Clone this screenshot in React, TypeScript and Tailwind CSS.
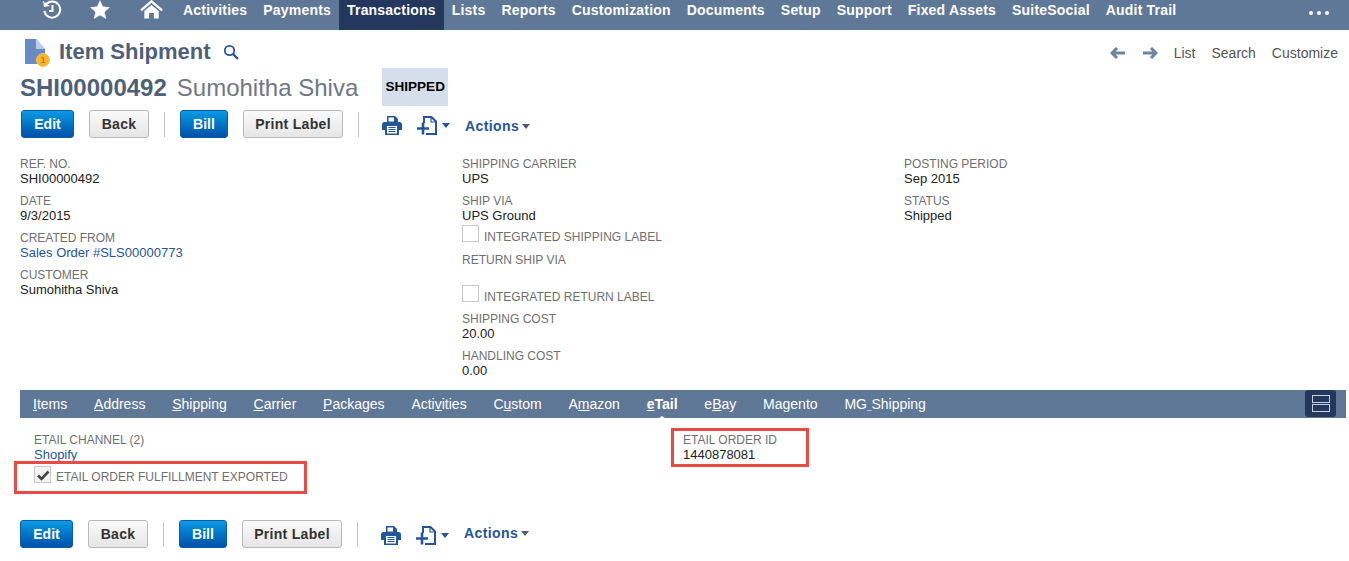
import { useState } from "react";

const navItems = [
  "Activities",
  "Payments",
  "Transactions",
  "Lists",
  "Reports",
  "Customization",
  "Documents",
  "Setup",
  "Support",
  "Fixed Assets",
  "SuiteSocial",
  "Audit Trail",
];

// accessKey letter is the underlined one, same as the real subtab bar
const tabs: { pre: string; key: string; post: string; active?: boolean }[] = [
  { pre: "", key: "I", post: "tems" },
  { pre: "", key: "A", post: "ddress" },
  { pre: "", key: "S", post: "hipping" },
  { pre: "", key: "C", post: "arrier" },
  { pre: "", key: "P", post: "ackages" },
  { pre: "Acti", key: "v", post: "ities" },
  { pre: "C", key: "u", post: "stom" },
  { pre: "A", key: "m", post: "azon" },
  { pre: "", key: "e", post: "Tail", active: true },
  { pre: "e", key: "B", post: "ay" },
  { pre: "Ma", key: "g", post: "ento" },
  { pre: "MG", key: "_", post: "Shipping" },
];

function Field({
  label,
  value,
  link,
}: {
  label: string;
  value?: string;
  link?: boolean;
}) {
  return (
    <div className="h-[37px] text-[12px] leading-[15px]">
      <div className="text-[#6f6f6f]">{label}</div>
      {value && (
        <div className={`-mt-[1px] text-[13px] ${link ? "text-[#255599]" : "text-[#222]"}`}>
          {value}
        </div>
      )}
    </div>
  );
}

function CheckRow({ label, checked }: { label: string; checked?: boolean }) {
  return (
    <div className="flex items-start text-[12px] leading-[15px] text-[#6f6f6f]">
      <span
        className={`flex h-[17px] w-[17px] items-center justify-center border border-[#c8c8c8] ${
          checked ? "bg-[#f3f3f3]" : "bg-white"
        }`}
      >
        {checked && (
          <svg viewBox="0 0 14 14" className="h-[14px] w-[14px]">
            <path d="M2 7.500 L5.500 11 L12.500 3.500" fill="none" stroke="#444" strokeWidth="2.600" />
          </svg>
        )}
      </span>
      <span className={`ml-[5px] ${checked ? "mt-[4px]" : "mt-[5px]"}`}>{label}</span>
    </div>
  );
}

function BlueBtn({ children, w }: { children: string; w: string }) {
  return (
    <button
      className={`h-[28px] ${w} rounded-[3px] border border-[#0b5cab] bg-gradient-to-b from-[#0d9be6] to-[#0050a8] text-[14px] font-bold text-white`}
    >
      {children}
    </button>
  );
}

function GrayBtn({ children, w }: { children: string; w: string }) {
  return (
    <button
      className={`h-[28px] ${w} rounded-[3px] border border-[#b9b9b9] bg-gradient-to-b from-[#fafafa] to-[#e6e6e6] text-[14px] font-bold tracking-[0.3px] text-[#333]`}
    >
      {children}
    </button>
  );
}

function PrintIcon() {
  return (
    <svg viewBox="0 0 20 19" className="h-[19px] w-[20px]">
      <path d="M5 0h8l3 3v4H5z" fill="#255599" />
      <path d="M6.500 1.500h5.500v4H6.500z" fill="#fff" />
      <path d="M2.500 6h15a2.500 2.500 0 0 1 2.500 2.500V14h-3v5H3v-5H0V8.500A2.500 2.500 0 0 1 2.500 6z" fill="#255599" />
      <path d="M5 10h10v7.500H5z" fill="#fff" />
      <path d="M6.500 11.500h7M6.500 13.500h7M6.500 15.500h7" stroke="#255599" strokeWidth="1" />
    </svg>
  );
}

function NewDocIcon() {
  return (
    <svg viewBox="0 0 20 19" className="h-[19px] w-[20px]">
      <path d="M7 7V1h7.500L19 5.500V18H9" fill="none" stroke="#255599" strokeWidth="2" />
      <path d="M14 1v5h5" fill="none" stroke="#255599" strokeWidth="1.200" />
      <path d="M0 12.500h12M6 6.500v12" stroke="#255599" strokeWidth="2.600" />
    </svg>
  );
}

function Caret({ className = "" }: { className?: string }) {
  return (
    <span
      className={`inline-block h-0 w-0 border-x-[4px] border-t-[5px] border-x-transparent border-t-[#4a5f80] ${className}`}
    />
  );
}

function Toolbar({
  className = "",
  iconsClass = "",
  actionsClass = "",
}: {
  className?: string;
  iconsClass?: string;
  actionsClass?: string;
}) {
  return (
    <div className={`flex h-[28px] items-center ${className}`}>
      <BlueBtn w="w-[53px]">Edit</BlueBtn>
      <div className="ml-[15px]">
        <GrayBtn w="w-[60px]">Back</GrayBtn>
      </div>
      <span className="mx-[15px] h-[25px] w-px bg-[#c4c4c4]" />
      <BlueBtn w="w-[48px]">Bill</BlueBtn>
      <div className="ml-[15px]">
        <GrayBtn w="w-[100px]">Print Label</GrayBtn>
      </div>
      <span className="ml-[15px] mr-[23px] h-[25px] w-px bg-[#c4c4c4]" />
      <div className={`flex items-center ${iconsClass}`}>
        <PrintIcon />
        <span className="ml-[15px] flex items-center">
          <NewDocIcon />
          <Caret className="ml-[5px] !border-t-[#255599]" />
        </span>
      </div>
      <div className={`ml-[15px] flex items-center ${actionsClass}`}>
        <span className="text-[14px] font-bold tracking-[0.4px] text-[#255599]">Actions</span>
        <Caret className="ml-[3px]" />
      </div>
    </div>
  );
}

export default function App() {
  const [activeTab] = useState("eTail");

  return (
    <div
      className="h-[561px] w-[1349px] overflow-hidden bg-white"
      style={{ fontFamily: '"Liberation Sans", Arial, sans-serif' }}
    >
      {/* top nav */}
      <div className="flex h-[30px] items-start bg-[#5f7898] text-white">
        <div className="flex h-[30px] w-[175px] items-start">
          <svg viewBox="0 0 20 20" className="ml-[42px] mt-0 h-[20px] w-[20px]">
            <path
              d="M4 4.500A8 8 0 1 1 2.300 11"
              fill="none"
              stroke="#fff"
              strokeWidth="2"
            />
            <path d="M1 1l1 6 6-1z" fill="#fff" />
            <path d="M10.500 5v6H7" fill="none" stroke="#fff" strokeWidth="2" />
          </svg>
          <svg viewBox="0 0 20 20" className="ml-[28px] h-[20px] w-[20px]">
            <path
              d="M10 0l2.900 6.600 7.100.7-5.400 4.700 1.600 7L10 15.300 3.800 19l1.600-7L0 7.300l7.100-.7z"
              fill="#fff"
            />
          </svg>
          <svg viewBox="0 0 24 20" className="ml-[30px] h-[20px] w-[23px]">
            <path d="M1 10.500L12 1l11 9.500" fill="none" stroke="#fff" strokeWidth="2.400" />
            <path d="M4.500 11L12 4.800 19.500 11v8h-5v-6h-5v6h-5z" fill="#fff" />
          </svg>
        </div>
        {navItems.map((item) => (
          <div
            key={item}
            className={`h-[30px] px-[8px] pt-[2px] text-[14px] font-bold leading-[17px] tracking-[0.2px] ${
              item === "Transactions" ? "bg-[#24375c]" : ""
            }`}
          >
            {item}
          </div>
        ))}
        <div className="ml-auto mr-[20px] mt-[11px] flex gap-[4px]">
          <span className="h-[4px] w-[4px] rounded-full bg-white" />
          <span className="h-[4px] w-[4px] rounded-full bg-white" />
          <span className="h-[4px] w-[4px] rounded-full bg-white" />
        </div>
      </div>

      {/* page title */}
      <div className="flex h-[38px] items-center pl-[25px] pr-[11px] pt-[6px]">
        <div className="relative h-[26px] w-[25px]">
          <svg viewBox="0 0 20 26" className="h-[26px] w-[20px]">
            <path d="M0 0h11l9 10v15H0z" fill="#6a8ac4" />
            <path d="M11 0l9 10h-9z" fill="#bccbe6" />
          </svg>
          <span className="absolute -bottom-[2px] right-0 flex h-[14px] w-[14px] items-center justify-center rounded-full border border-[#f7c64a] bg-[#f5b62e] text-[9px] leading-none text-[#a86f00]">
            1
          </span>
        </div>
        <h1 className="ml-[9px] text-[22px] font-bold leading-none text-[#4d5f79]">
          Item Shipment
        </h1>
        <svg viewBox="0 0 16 16" className="ml-[12px] h-[16px] w-[16px]">
          <circle cx="6.500" cy="6.500" r="4.700" fill="none" stroke="#255599" strokeWidth="1.800" />
          <path d="M10 10l5 5" stroke="#255599" strokeWidth="2.400" />
        </svg>
        <div className="ml-auto mt-[2px] flex items-center text-[14px] text-[#555]">
          <svg viewBox="0 0 16 12" className="h-[12px] w-[16px]">
            <path d="M7 1L2 6l5 5M2 6h13" fill="none" stroke="#6e84a3" strokeWidth="3" />
          </svg>
          <svg viewBox="0 0 16 12" className="ml-[16px] h-[12px] w-[16px]">
            <path d="M9 1l5 5-5 5M14 6H1" fill="none" stroke="#6e84a3" strokeWidth="3" />
          </svg>
          <span className="ml-[16px]">List</span>
          <span className="ml-[16px]">Search</span>
          <span className="ml-[16px]">Customize</span>
        </div>
      </div>

      {/* record name */}
      <div className="flex h-[42px] items-start pl-[20px]">
        <span className="mt-[8px] text-[24px] font-bold leading-none text-[#4d5f79]">SHI00000492</span>
        <span className="ml-[10px] mt-[8px] text-[24px] leading-none text-[#6f7782]">Sumohitha Shiva</span>
        <span className="ml-[24px] flex h-[38px] w-[66px] items-center justify-center bg-[#d5dfeb] text-[13.500px] font-bold text-black">
          SHIPPED
        </span>
      </div>

      <Toolbar className="pl-[21px]" iconsClass="mt-[2px]" actionsClass="mt-[5px]" />

      {/* main fields */}
      <div className="mt-[19px] grid grid-cols-[442px_442px_1fr] pl-[20px]">
        <div>
          <Field label="REF. NO." value="SHI00000492" />
          <Field label="DATE" value="9/3/2015" />
          <Field label="CREATED FROM" value="Sales Order #SLS00000773" link />
          <Field label="CUSTOMER" value="Sumohitha Shiva" />
        </div>
        <div>
          <Field label="SHIPPING CARRIER" value="UPS" />
          <Field label="SHIP VIA" value="UPS Ground" />
          <div className="-mt-[6px] h-[26px]">
            <CheckRow label="INTEGRATED SHIPPING LABEL" />
          </div>
          <div className="mt-[2px] h-[32px] text-[12px] leading-[15px] text-[#6f6f6f]">
            RETURN SHIP VIA
          </div>
          <div className="h-[27px]">
            <CheckRow label="INTEGRATED RETURN LABEL" />
          </div>
          <Field label="SHIPPING COST" value="20.00" />
          <Field label="HANDLING COST" value="0.00" />
        </div>
        <div>
          <Field label="POSTING PERIOD" value="Sep 2015" />
          <Field label="STATUS" value="Shipped" />
        </div>
      </div>

      {/* subtabs */}
      <div className="relative ml-[20px] mt-[4px] flex h-[28px] w-[1326px] items-center bg-[#5f7898] pl-[13px] text-[14px] text-white">
        {tabs.map((t) => {
          const isActive = t.active && t.pre + t.key + t.post === activeTab;
          return (
            <span
              key={t.key + t.post}
              className={`relative mr-[26.800px] ${isActive ? "font-bold" : ""}`}
            >
              {t.pre}
              {/* the underscore of MG_Shipping is short in the real bar */}
              {t.key === "_" ? (
                <span className="text-[8px]">_</span>
              ) : (
                <span className="underline">{t.key}</span>
              )}
              {t.post}
              {isActive && (
                <span className="absolute -bottom-[6px] left-1/2 h-0 w-0 -translate-x-1/2 border-x-[7px] border-b-[5px] border-x-transparent border-b-white" />
              )}
            </span>
          );
        })}
        <span className="absolute right-[10px] top-0 flex h-[27px] w-[31px] flex-col items-center justify-center gap-[1px] rounded-[3px] bg-[#24375c]">
          <span className="h-[8px] w-[18px] border border-[#c5cfdd]" />
          <span className="h-[8px] w-[18px] border border-[#c5cfdd]" />
        </span>
      </div>

      {/* subtab content */}
      <div className="relative h-[102px] pl-[34px] pt-[15px]">
        <div className="h-[33px] text-[12px] leading-[15px]">
          <div className="text-[#6f6f6f]">ETAIL CHANNEL (2)</div>
          <div className="-mt-[1px] text-[13px] text-[#255599]">Shopify</div>
        </div>
        <CheckRow label="ETAIL ORDER FULFILLMENT EXPORTED" checked />
        <div className="pointer-events-none absolute left-[14px] top-[43px] h-[33px] w-[293px] border-[3px] border-[#ea4a44]" />
        <div className="absolute left-[683px] top-[15px] text-[12px] leading-[15px]">
          <div className="text-[#6f6f6f]">ETAIL ORDER ID</div>
          <div className="-mt-[1px] text-[13px] text-[#222]">1440878081</div>
        </div>
        <div className="pointer-events-none absolute left-[671px] top-[10px] h-[39px] w-[138px] border-[3px] border-[#ea4a44]" />
      </div>

      <Toolbar className="pl-[20px]" iconsClass="mt-[2px]" actionsClass="-mt-[1px]" />
    </div>
  );
}
